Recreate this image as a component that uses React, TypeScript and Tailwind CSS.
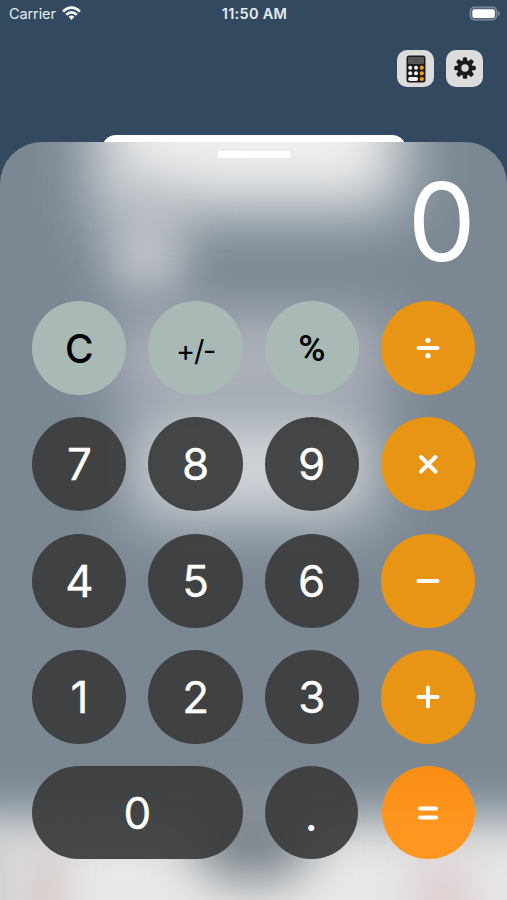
import type { ReactNode } from "react";
import clsx from "clsx";

type Tone = "light" | "dark" | "orange" | "equals";

const tones: Record<Tone, string> = {
  light: "bg-[#a9bab6] text-black",
  dark: "bg-[#3a3b3c]/93 text-white",
  orange: "bg-[#e89415] text-white",
  equals: "bg-linear-to-b from-[#f98d13] to-[#ff961f] to-60% text-white",
};

type KeyProps = { tone: Tone; size?: string; className?: string; label?: string; children: ReactNode };

function Key({ tone, size = "text-[44px] font-normal [-webkit-text-stroke:0.3px_white]", className, label, children }: KeyProps) {
  return (
    <button
      aria-label={label}
      className={clsx("flex items-center justify-center rounded-full leading-none", size, tones[tone], className)}
    >
      {children}
    </button>
  );
}

function Operator({ children }: { children: ReactNode }) {
  return (
    <svg viewBox="0 0 30 30" className="h-[30px] w-[30px]" fill="none" stroke="currentColor" strokeWidth="4" strokeLinecap="round">
      {children}
    </svg>
  );
}

function StatusBar() {
  return (
    <div className="grid h-7 grid-cols-3 items-center pr-[7px] pl-[9px] text-[14.5px] text-[#e6eef2]">
      <div className="flex items-center gap-[6px]">
        <span className="tracking-[-0.1px]">Carrier</span>
        <svg viewBox="0 0 20 15" className="h-[15px] w-[19px] -translate-y-px" fill="none" stroke="#f4fbff" strokeWidth="2.7">
          <path d="M1.2 5.6C6-.1 14-.1 18.8 5.6" />
          <path d="M4.5 9c3.1-3.6 7.9-3.6 11 0" />
          <path d="M7 11c1.7-1.7 4.3-1.7 6 0l-3 3.4z" fill="#f4fbff" stroke="none" />
        </svg>
      </div>
      <span className="text-center font-semibold tracking-[0.3px] whitespace-nowrap">11:50 AM</span>
      <svg viewBox="0 0 31 15" className="h-[15px] w-[31px] -translate-y-px justify-self-end">
        <rect x="1.3" y="1.2" width="26.4" height="12.6" rx="4" fill="#536579" stroke="#8290a0" strokeWidth="1.2" />
        <rect x="3.4" y="3.2" width="22.4" height="8.8" rx="2" fill="#fff" />
        <path d="M29 5c2.3 1 2.3 4 0 5z" fill="#8290a0" />
      </svg>
    </div>
  );
}

function CalculatorIcon() {
  return (
    <svg viewBox="0 0 20 28" className="h-7 w-5">
      <rect x=".5" y=".5" width="19" height="27" rx="2.5" fill="#1b1b1c" />
      <rect x="2" y="2" width="16" height="7" rx="1" fill="#555656" />
      {[12.7, 18.3].map((y) => (
        <g key={y}>
          <circle cx="4.2" cy={y} r="2" fill="#f1f1ef" />
          <circle cx="10" cy={y} r="2" fill="#f1f1ef" />
          <circle cx="15.8" cy={y} r="2.1" fill="#f59b12" />
        </g>
      ))}
      <rect x="2.2" y="22" width="9.8" height="4" rx="1.7" fill="#f1f1ef" />
      <circle cx="15.8" cy="24" r="2.1" fill="#f59b12" />
    </svg>
  );
}

function GearIcon() {
  return (
    <svg viewBox="-12 -12 24 24" className="h-6 w-6 -translate-y-px">
      {[0, 45, 90, 135].map((angle) => (
        <rect key={angle} x="-2.2" y="-10.8" width="4.4" height="21.6" rx="1.5" fill="#1c1c1c" transform={`rotate(${angle})`} />
      ))}
      <circle r="7.8" fill="#1c1c1c" />
      <circle r="3.7" fill="#dcdcdc" />
    </svg>
  );
}

// Content behind the sheet, seen through frosted glass
function Frost() {
  return (
    <div className="pointer-events-none absolute inset-0">
      <div className="absolute -top-[130px] left-[100px] h-[196px] w-[300px] bg-[#f0f0f0] blur-[32px]" />
      <div className="absolute top-[30px] left-[106px] h-[110px] w-[78px] bg-[#c0c4cb]/70 blur-[28px]" />
      <div className="absolute top-[90px] left-[114px] h-[58px] w-[66px] rounded-full bg-[#d0d1d6]/70 blur-[20px]" />
      <div className="absolute top-[175px] left-[116px] h-[80px] w-[268px] bg-[#b6b7c0] blur-[30px]" />
      <div className="absolute top-[272px] left-[134px] h-[106px] w-[240px] bg-[#d2d5da] blur-[30px]" />
      <div className="absolute top-[678px] -left-[70px] h-[190px] w-[650px] bg-[#e8e8e8] blur-[25px]" />
      <div className="absolute top-[700px] -left-[30px] h-[100px] w-[40px] bg-[#b5b5b5]/60 blur-[18px]" />
      <div className="absolute top-[705px] left-[24px] h-[90px] w-[44px] bg-[#c9b9b8]/60 blur-[18px]" />
      <div className="absolute top-[652px] left-[192px] h-[88px] w-[120px] rounded-full bg-[#7b848b] blur-[24px]" />
      <div className="absolute top-[712px] left-[410px] h-[90px] w-[65px] bg-[#dac6c8]/70 blur-[22px]" />
    </div>
  );
}

export default function App() {
  return (
    <div className="flex h-[900px] w-[507px] flex-col overflow-hidden bg-[#33495f] font-['Inter',sans-serif]">
      <StatusBar />
      <div className="mt-[22px] mr-6 flex justify-end gap-3">
        <button aria-label="Calculator" className="flex h-[37px] w-[37px] items-center justify-center rounded-[10px] bg-[#dcdcdc]">
          <CalculatorIcon />
        </button>
        <button aria-label="Settings" className="flex h-[37px] w-[37px] items-center justify-center rounded-[10px] bg-[#dcdcdc]">
          <GearIcon />
        </button>
      </div>
      <div className="mt-12 ml-[102px] h-5 w-[304px] shrink-0 rounded-t-[14px] bg-white" />

      <main className="relative -mt-[13px] h-[758px] shrink-0 overflow-hidden rounded-t-[42px] bg-[#7b8893]">
        <Frost />
        <div className="relative flex h-full flex-col">
          <div className="mx-auto mt-[9px] h-[7px] w-[73px] translate-x-[0.5px] rounded-[2px] bg-white" />
          <div className="mt-[11px] mr-[31px] h-[106px] text-right text-[108px] leading-[106px] font-normal text-white">0</div>
          <div className="mt-[26px] ml-[32.3px] grid grid-cols-[repeat(4,94.2px)] grid-rows-[repeat(4,94px)_93px] gap-x-[22px] gap-y-[22.3px]">
            <Key tone="light" size="text-[39px] font-medium">C</Key>
            <Key tone="light" size="text-[29px] font-normal tracking-[-1.3px] pt-1">+/-</Key>
            <Key tone="light" size="text-[37px] font-medium font-['Roboto',sans-serif]">%</Key>
            <Key tone="orange" label="divide">
              <Operator>
                <path d="M5.5 15h19" />
                <circle cx="15" cy="7.3" r="2.6" fill="currentColor" stroke="none" />
                <circle cx="15" cy="22.7" r="2.6" fill="currentColor" stroke="none" />
              </Operator>
            </Key>
            <Key tone="dark">7</Key>
            <Key tone="dark">8</Key>
            <Key tone="dark">9</Key>
            <Key tone="orange" label="multiply">
              <Operator>
                <path d="M8 8l14.5 14.5M22.5 8L8 22.5" />
              </Operator>
            </Key>
            <Key tone="dark">4</Key>
            <Key tone="dark">5</Key>
            <Key tone="dark">6</Key>
            <Key tone="orange" label="subtract">
              <Operator>
                <path d="M5.5 15h19" />
              </Operator>
            </Key>
            <Key tone="dark">1</Key>
            <Key tone="dark">2</Key>
            <Key tone="dark">3</Key>
            <Key tone="orange" label="add">
              <Operator>
                <path d="M5.5 15h19M15 5.5v19" />
              </Operator>
            </Key>
            <Key tone="dark" className="col-span-2">0</Key>
            <Key tone="dark" size="text-[48px] font-['Lato',sans-serif]" className="w-[93px]">.</Key>
            <Key tone="equals" label="equals" className="w-[93.5px] justify-self-end">
              <Operator>
                <path d="M7 10.5h16M7 19.5h16" />
              </Operator>
            </Key>
          </div>
        </div>
      </main>
    </div>
  );
}
